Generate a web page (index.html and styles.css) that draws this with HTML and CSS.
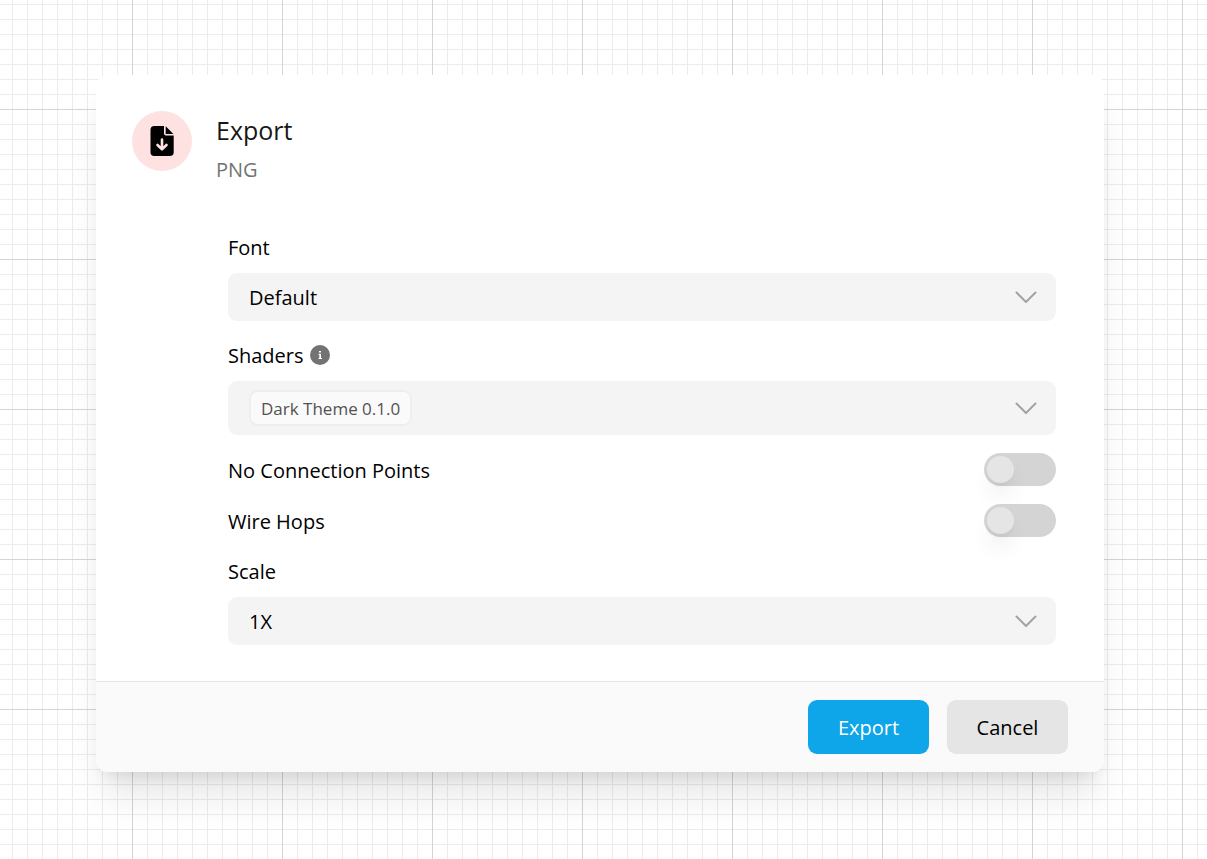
FILE: index.html
```
<!DOCTYPE html>
<html lang="en">
<head>
    <meta charset="UTF-8" />
    <meta name="viewport" content="width=device-width, initial-scale=1.0" />
    <title>Export</title>
    <link rel="stylesheet" href="styles.css">
</head>
<body>
    <main class="canvas">
        <form class="modal" role="dialog" aria-labelledby="modalTitle">
            <div class="modal-body">
                <div class="modal-icon">
                    <svg width="24" height="30" viewBox="0 0 24 30" aria-hidden="true">
                        <path d="M4.300 0H14v7.500a2 2 0 0 0 2 2h7.700V26.200a3.800 3.800 0 0 1-3.800 3.800H4.300a3.800 3.800 0 0 1-3.800-3.800V3.800A3.800 3.800 0 0 1 4.300 0z" />
                        <path d="M15.700 0.300L23.400 8H15.700z" />
                        <path class="arrow" d="M12 13.500v9.500M7.500 19l4.500 4.400L16.500 19" />
                    </svg>
                </div>

                <div class="modal-content">
                    <h1 id="modalTitle">Export</h1>
                    <p class="subtitle">PNG</p>

                    <div class="fields">
                        <div class="field">
                            <label for="font">Font</label>
                            <div class="select">
                                <select id="font">
                                    <option>Default</option>
                                </select>
                                <svg class="chevron" width="22" height="12" viewBox="0 0 22 12" aria-hidden="true"><path d="M1.500 1.500l9.500 9.500L20.500 1.500" /></svg>
                            </div>
                        </div>

                        <div class="field">
                            <div class="label-row">
                                <label for="shaders">Shaders</label>
                                <svg class="info" width="20" height="20" viewBox="0 0 20 20" aria-hidden="true">
                                    <circle cx="10" cy="10" r="10" />
                                    <path d="M9 6h2v1.500H9zM8.500 8.700h2.500v4.300h1V14H8.500v-1H9.300V9.700h-.800z" />
                                </svg>
                            </div>
                            <button type="button" id="shaders" class="multiselect" aria-haspopup="listbox">
                                <span class="tag">Dark Theme 0.1.0</span>
                                <svg class="chevron" width="22" height="12" viewBox="0 0 22 12" aria-hidden="true"><path d="M1.500 1.500l9.500 9.500L20.500 1.500" /></svg>
                            </button>
                        </div>

                        <div class="switch-row">
                            <label for="points">No Connection Points</label>
                            <input type="checkbox" role="switch" id="points" class="switch" />
                        </div>

                        <div class="switch-row">
                            <label for="hops">Wire Hops</label>
                            <input type="checkbox" role="switch" id="hops" class="switch" />
                        </div>

                        <div class="field">
                            <label for="scale">Scale</label>
                            <div class="select">
                                <select id="scale">
                                    <option>1X</option>
                                    <option>2X</option>
                                    <option>4X</option>
                                </select>
                                <svg class="chevron" width="22" height="12" viewBox="0 0 22 12" aria-hidden="true"><path d="M1.500 1.500l9.500 9.500L20.500 1.500" /></svg>
                            </div>
                        </div>
                    </div>
                </div>
            </div>

            <div class="modal-footer">
                <button type="button" class="btn btn-primary">Export</button>
                <button type="button" class="btn">Cancel</button>
            </div>
        </form>
    </main>
</body>
</html>
```

FILE: styles.css
```
:root {
    --line: #ececec;
    --line-major: #d4d4d4;
    --field: #f4f4f4;
    --gray: #e5e5e5;
    --blue: #0ea5e9;
}

* {
    box-sizing: border-box;
}

body {
    margin: 0;
    font-family: "Segoe UI", "Open Sans", sans-serif;
    font-size: 20px;
    line-height: 30px;
    color: #000;
}

/* drawing grid: 15px cells, a darker line every 10 cells */
.canvas {
    min-height: 100vh;
    padding: 75px 7px 87px 0;
    background-color: #fff;
    background-image:
        linear-gradient(to right, var(--line-major) 1px, transparent 1px),
        linear-gradient(to bottom, var(--line-major) 1px, transparent 1px),
        linear-gradient(to right, var(--line) 1px, transparent 1px),
        linear-gradient(to bottom, var(--line) 1px, transparent 1px);
    background-size: 150px 150px, 150px 150px, 15px 15px, 15px 15px;
    background-position: 132px 109px, 132px 109px, 12px 4px, 12px 4px;
}

.modal {
    max-width: 1008px;
    margin: 0 auto;
    background: #fff;
    border-radius: 12px;
    overflow: hidden;
    box-shadow: 0 30px 38px -8px rgba(0,0,0,0.1), 0 12px 15px -9px rgba(0,0,0,0.1);
}

.modal-body {
    display: flex;
    gap: 24px;
    padding: 36px;
}

.modal-icon {
    display: flex;
    align-items: center;
    justify-content: center;
    flex: none;
    width: 60px;
    height: 60px;
    border-radius: 50%;
    background: #fee2e2;
}

.modal-icon .arrow {
    fill: none;
    stroke: #fee2e2;
    stroke-width: 2.6;
    stroke-linecap: round;
    stroke-linejoin: round;
}

.modal-content {
    flex: 1;
}

h1 {
    margin: 0;
    font-size: 25px;
    font-weight: 400;
    line-height: 38px;
    color: #171717;
}

.subtitle {
    margin: 0;
    line-height: 42px;
    color: #737373;
}

.fields {
    display: flex;
    flex-direction: column;
    gap: 18px;
    padding: 40px 12px 0;
}

.field {
    display: flex;
    flex-direction: column;
    gap: 10px;
}

label {
    padding-top: 2px;
}

.label-row {
    display: flex;
    align-items: center;
    gap: 6px;
}

.info {
    fill: #737373;
}

.info path {
    fill: #fff;
}

.select {
    display: grid;
    align-items: center;
}

.select select,
.select .chevron {
    grid-area: 1 / 1;
}

.select .chevron {
    justify-self: end;
    margin-right: 19px;
    pointer-events: none;
}

select,
button {
    font: inherit;
    color: inherit;
    border: none;
    border-radius: 9px;
}

select {
    appearance: none;
    width: 100%;
    height: 48px;
    padding: 2px 48px 0 21px;
    background: var(--field);
}

.chevron path {
    fill: none;
    stroke: #a3a3a3;
    stroke-width: 2;
    stroke-linecap: round;
    stroke-linejoin: round;
}

.multiselect {
    display: flex;
    align-items: center;
    justify-content: space-between;
    height: 54px;
    padding: 0 19px 0 21px;
    background: var(--field);
}

.tag {
    padding: 2px 10px 0;
    border: 2px solid #eee;
    border-radius: 9px;
    background: #fafafa;
    font-size: 17px;
    color: #525252;
}

.switch-row {
    display: flex;
    align-items: center;
    justify-content: space-between;
    height: 33px;
}

.switch {
    appearance: none;
    width: 72px;
    height: 33px;
    margin: 0;
    padding: 3px;
    border-radius: 17px;
    background: #d4d4d4;
}

.switch::before {
    content: "";
    display: block;
    width: 27px;
    height: 27px;
    border-radius: 50%;
    background: #e5e5e5;
    box-shadow: 0 15px 22px -4px rgba(0,0,0,0.1), 0 6px 9px -6px rgba(0,0,0,0.1);
}

.switch:checked {
    background: var(--blue);
}

.switch:checked::before {
    margin-left: auto;
}

.modal-footer {
    display: flex;
    justify-content: flex-end;
    gap: 18px;
    padding: 18px 36px;
    border-top: 1px solid var(--gray);
    background: #fafafa;
}

.btn {
    min-width: 121px;
    height: 54px;
    padding: 2px 24px 0;
    background: var(--gray);
    cursor: pointer;
}

.btn-primary {
    background: var(--blue);
    color: #fff;
}
```
